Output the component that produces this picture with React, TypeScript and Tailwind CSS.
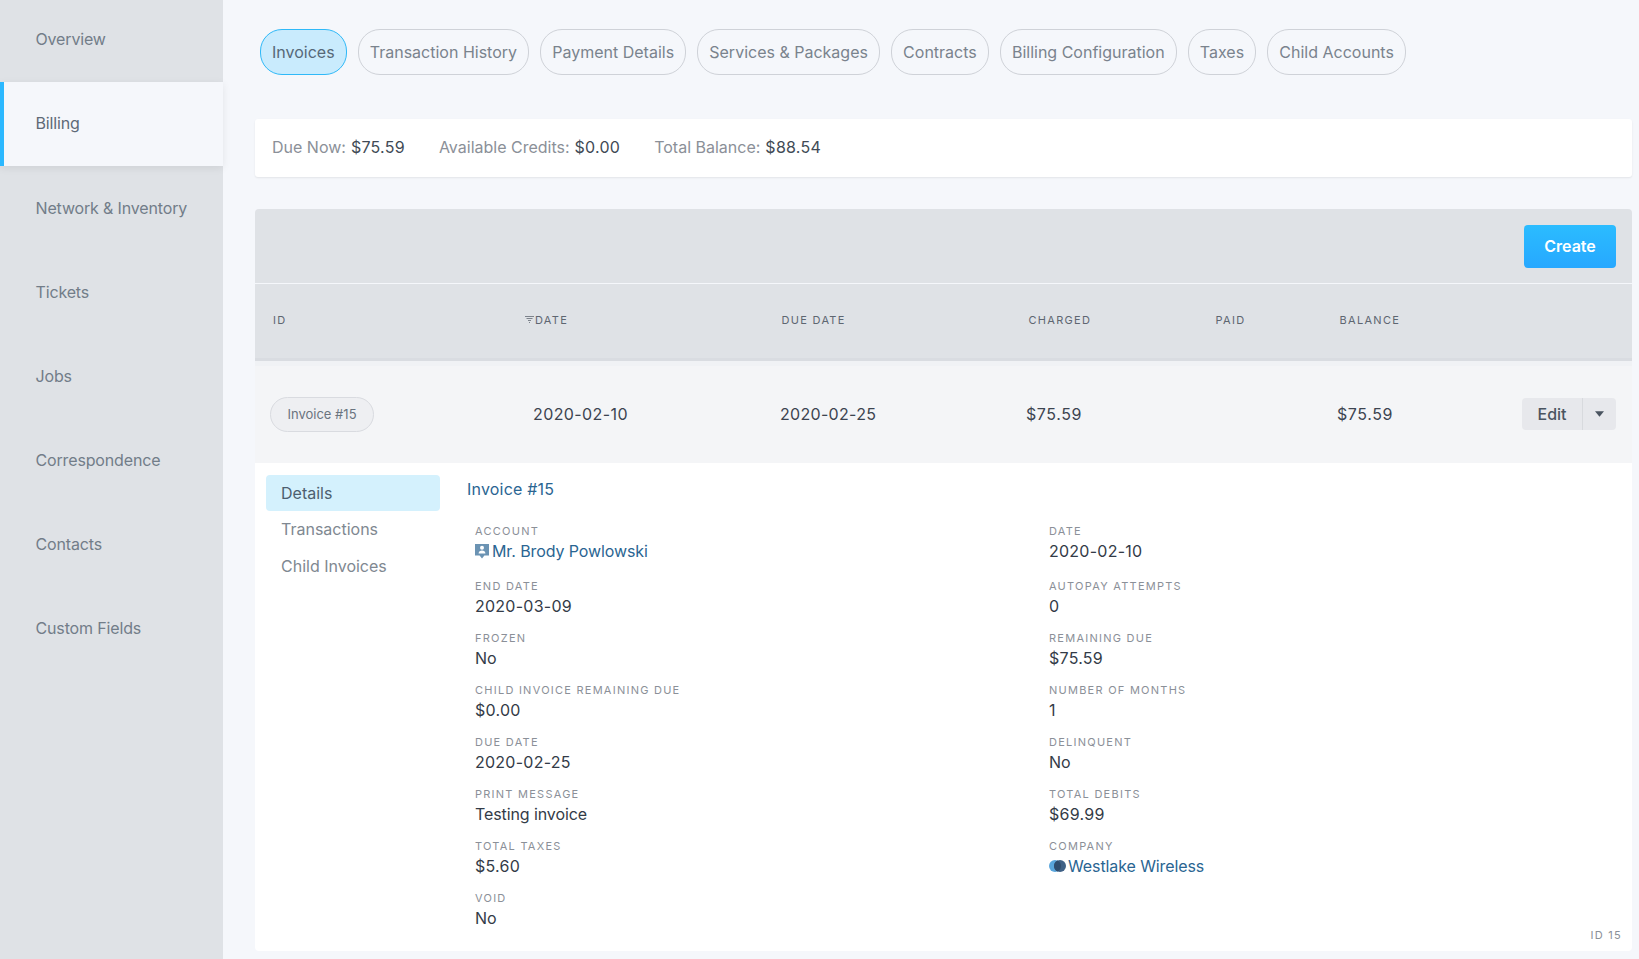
import React from 'react';

const sideItems = ['Overview', 'Billing', 'Network & Inventory', 'Tickets', 'Jobs', 'Correspondence', 'Contacts', 'Custom Fields'];
const tabs = ['Invoices', 'Transaction History', 'Payment Details', 'Services & Packages', 'Contracts', 'Billing Configuration', 'Taxes', 'Child Accounts'];
const balances = [
  ['Due Now:', '$75.59'],
  ['Available Credits:', '$0.00'],
  ['Total Balance:', '$88.54'],
];

const AccountIcon = () => (
  <svg viewBox="0 0 16 16" className="w-[16px] h-[16px] shrink-0 mr-[2px] -ml-px">
    <path d="M1 1h14v11.5h-4.6L8 15.5l-2.4-3H1z" fill="#6b93b3" />
    <circle cx="8" cy="4.8" r="2" fill="#fff" />
    <path d="M4.6 10.5c0-2 1.5-3 3.4-3s3.4 1 3.4 3z" fill="#fff" />
  </svg>
);

const CompanyIcon = () => (
  <svg viewBox="0 0 17 12" className="w-[17px] h-[12px] shrink-0 mr-[2px]">
    <circle cx="6" cy="6" r="6" fill="#5aa6dc" />
    <circle cx="11" cy="6" r="6" fill="#3f6186" />
    <path d="M8.5 .55a6 6 0 0 1 0 10.9a6 6 0 0 1 0-10.9z" fill="#2f4d6e" />
  </svg>
);

const Field = ({ label, value, link, icon, first }: { label: string; value: string; link?: boolean; icon?: React.ReactNode; first?: boolean }) => (
  <div className={first ? 'mb-[3px]' : ''}>
    <div className="text-[11px] leading-[14px] tracking-[1.25px] uppercase text-[#8b9098]">{label}</div>
    <div
      className={`flex items-center text-[16px] leading-[24px] mt-[1px] ${/\d/.test(value) ? 'tracking-[0.25px]' : 'tracking-[-0.1px]'} ${
        link ? 'text-[#2a6592]' : 'text-[#333b47]'
      }`}
    >
      {icon}
      {value}
    </div>
  </div>
);

const App = () => {
  return (
    <div className="flex h-[959px] overflow-hidden bg-[#f5f7fb] text-[16px] [font-family:Inter,sans-serif]">
      <aside className="w-[223px] shrink-0 bg-[#dfe2e6]">
        {sideItems.map((item, i) => (
          <div
            key={item}
            className={`flex items-center tracking-[-0.15px] ${i === 0 ? 'h-[82px] pb-[4px]' : 'h-[84px]'} ${
              item === 'Billing'
                ? 'pb-[3px] pl-[31.5px] bg-[#f5f7fb] border-l-4 border-[#2bb8ff] text-[#5e6a77] shadow-[0_2px_8px_rgba(0,0,0,0.08)]'
                : 'pl-[35.5px] text-[#727d89]'
            }`}
          >
            {item}
          </div>
        ))}
      </aside>

      <main className="flex-1 pl-[32px] pr-[7px]">
        <div className="flex gap-[11.2px] pt-[29px] pl-[5px]">
          {tabs.map((tab, i) => (
            <div
              key={tab}
              className={`h-[46px] flex items-center px-[11px] rounded-[22px] border whitespace-nowrap ${
                i === 0 ? 'bg-[#c9ebfd] border-[#2fb9f8] text-[#566878]' : 'border-[#cfd2d8] text-[#7a838d]'
              }`}
            >
              {tab}
            </div>
          ))}
        </div>

        <div className="mt-[44px] h-[58px] pb-[2px] flex items-center gap-[34px] px-[17px] bg-white rounded-[3px] shadow-[0_1px_2px_rgba(0,0,0,0.08)]">
          {balances.map(([label, value]) => (
            <div key={label} className="flex gap-[5px] whitespace-nowrap">
              <span className="text-[#8b9098]">{label}</span>
              <span className="text-[#414a55] tracking-[0.25px]">{value}</span>
            </div>
          ))}
        </div>

        <div className="mt-[32px] h-[74px] flex items-center justify-end pr-[16px] bg-[#dfe2e6] rounded-t-[4px]">
          <button className="w-[92px] h-[43px] pb-px rounded-[4px] bg-gradient-to-b from-[#2bbcff] to-[#27a8ff] text-white font-semibold">Create</button>
        </div>

        <div className="mt-px h-[77px] pl-[18px] pb-px grid grid-cols-[252px_256.5px_247px_187px_124px_1fr] items-center bg-[#dfe2e6] border-b-[3px] border-[#d9dce1] text-[11px] tracking-[1.3px] uppercase text-[#5e6671]">
          <div>ID</div>
          <div className="relative">
            <svg viewBox="0 0 9 8" className="absolute left-0 top-[4px] w-[9px] h-[8px]">
              <path d="M0 .5h9M1.5 2.5h6M3 4.5h3M4 6.5h1" stroke="#7d838c" strokeWidth="1" />
            </svg>
            <span className="pl-[10px]">Date</span>
          </div>
          <div>Due Date</div>
          <div>Charged</div>
          <div>Paid</div>
          <div>Balance</div>
        </div>

        <div className="h-[102px] pl-[15px] pr-[16px] pb-[2px] grid grid-cols-[263px_247px_246px_189px_122px_1fr] items-center bg-[#f4f5f7] border-t-[5px] border-[#f0f2f5] text-[#3c4450] tracking-[0.6px]">
          <div className="pt-[2px]">
            <span className="inline-flex items-center justify-center w-[104px] h-[35px] rounded-[18px] bg-[#eeeff2] border border-[#d9dbe0] text-[13px] tracking-normal text-[#6a7480]">
              Invoice #15
            </span>
          </div>
          <div className="tracking-[0.4px]">2020-02-10</div>
          <div className="tracking-[0.3px]">2020-02-25</div>
          <div>$75.59</div>
          <div />
          <div className="flex items-center justify-between">
            <span>$75.59</span>
            <div className="flex h-[32px] rounded-[4px] bg-[#e7e8ec] text-[#4a5460] font-medium tracking-normal">
              <span className="w-[61px] flex items-center justify-center border-r border-[#d8dade]">Edit</span>
              <span className="w-[33px] flex items-center justify-center">
                <svg viewBox="0 0 10 6" className="w-[9px] h-[6px]">
                  <path d="M0 0h10L5 6z" fill="#4a5460" />
                </svg>
              </span>
            </div>
          </div>
        </div>

        <div className="h-[488px] bg-white rounded-b-[4px] flex flex-col">
          <div className="flex flex-1">
            <div className="w-[194px] shrink-0 pl-[11px] pt-[12px]">
              <div className="w-[174px] h-[36px] flex items-center pl-[15px] rounded-[4px] bg-[#d4f1fd] text-[#4d5f6f]">Details</div>
              <div className="h-[37px] -mt-px flex items-center pl-[15px] text-[#808891]">Transactions</div>
              <div className="h-[37px] flex items-center pl-[15px] text-[#808891]">Child Invoices</div>
            </div>
            <div className="flex-1 pl-[18px] pt-[14px]">
              <div className="text-[#2a6592] leading-[24px] tracking-[0.2px]">Invoice #15</div>
              <div className="mt-[23px] ml-[8px] grid grid-cols-[574px_1fr] gap-y-[13px]">
                <Field label="Account" value="Mr. Brody Powlowski" link icon={<AccountIcon />} first />
                <Field label="Date" value="2020-02-10" first />
                <Field label="End Date" value="2020-03-09" />
                <Field label="Autopay Attempts" value="0" />
                <Field label="Frozen" value="No" />
                <Field label="Remaining Due" value="$75.59" />
                <Field label="Child Invoice Remaining Due" value="$0.00" />
                <Field label="Number of Months" value="1" />
                <Field label="Due Date" value="2020-02-25" />
                <Field label="Delinquent" value="No" />
                <Field label="Print Message" value="Testing invoice" />
                <Field label="Total Debits" value="$69.99" />
                <Field label="Total Taxes" value="$5.60" />
                <Field label="Company" value="Westlake Wireless" link icon={<CompanyIcon />} />
                <Field label="Void" value="No" />
              </div>
            </div>
          </div>
          <div className="-mt-[3px] text-right pr-[10px] pb-[9px] text-[11px] leading-[14px] tracking-[1.25px] text-[#8b9098]">ID 15</div>
        </div>
      </main>
    </div>
  );
};

export default App;
